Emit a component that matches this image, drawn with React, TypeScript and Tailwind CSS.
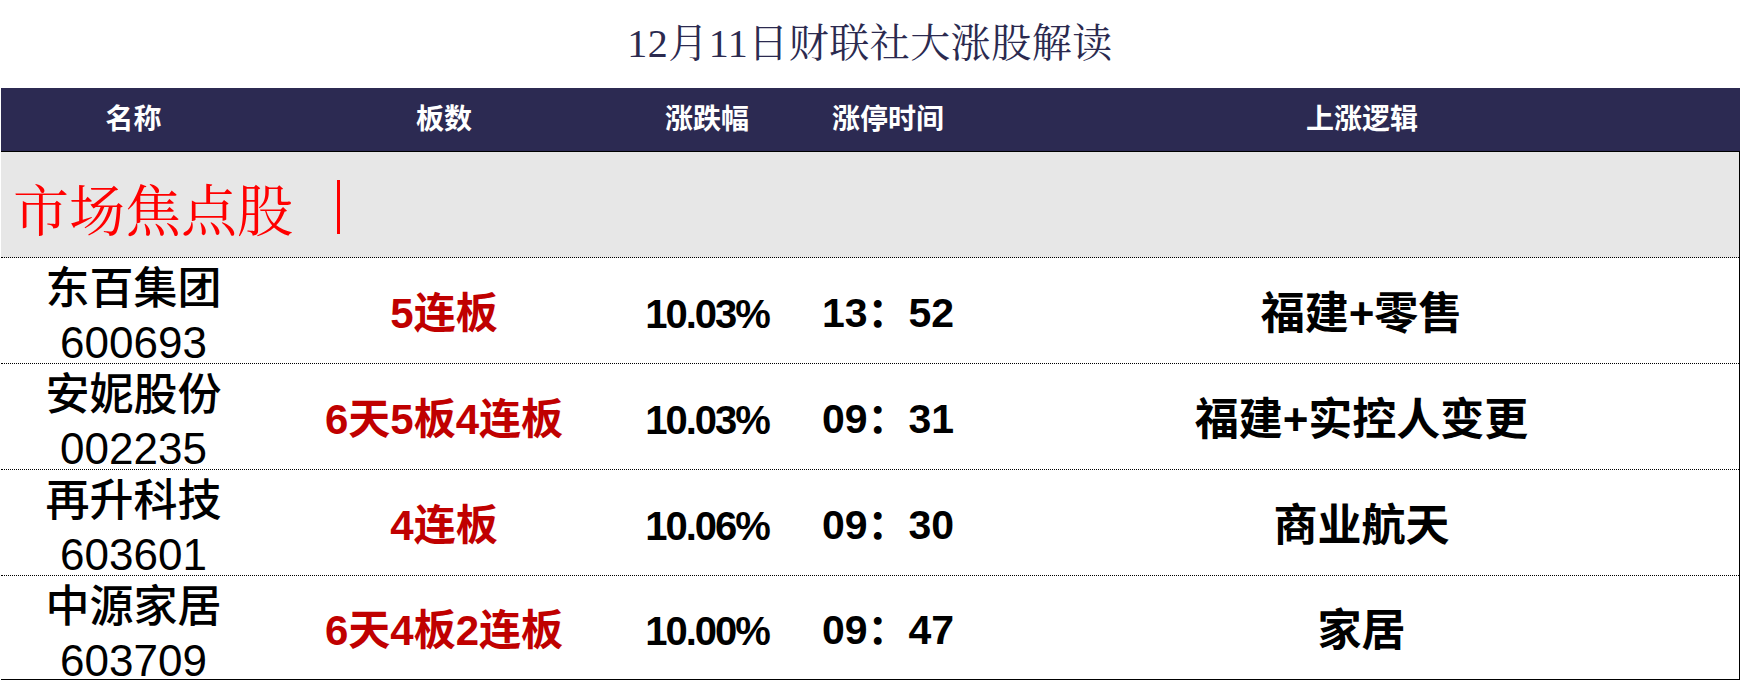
import React from "react";

const rows = [
  { name: "东百集团", code: "600693", board: "5连板", pct: "10.03%", time: "13：52", logic: "福建+零售" },
  { name: "安妮股份", code: "002235", board: "6天5板4连板", pct: "10.03%", time: "09：31", logic: "福建+实控人变更" },
  { name: "再升科技", code: "603601", board: "4连板", pct: "10.06%", time: "09：30", logic: "商业航天" },
  { name: "中源家居", code: "603709", board: "6天4板2连板", pct: "10.00%", time: "09：47", logic: "家居" },
];

const sans = "font-['Liberation_Sans','Noto_Sans_CJK_SC',sans-serif]";

export default function App() {
  return (
    <div className="w-[1740px] h-[682px] bg-white overflow-hidden">
      <div className="h-[88px] flex items-center justify-center">
        <span className="font-['Liberation_Serif','Noto_Serif_CJK_SC','Noto_Sans_CJK_SC',serif] text-[40px] leading-none tracking-[0.5px] text-[#2b2a4f]">
          12月11日财联社大涨股解读
        </span>
      </div>
      <div className="pl-[1px]">
        <div
          className={`h-[64px] bg-[#2c2a52] border-b border-black grid grid-cols-[265px_356px_170px_192px_1fr] grid-rows-1 items-center text-white font-bold text-[28px] leading-none ${sans}`}
        >
          <div className="text-center">名称</div>
          <div className="text-center">板数</div>
          <div className="text-center">涨跌幅</div>
          <div className="text-center">涨停时间</div>
          <div className="text-center">上涨逻辑</div>
        </div>
        <div className="border-r border-black">
          <div className="h-[106px] bg-[#e7e7e7] border-b border-dotted border-black flex items-center pl-[12px] pt-[4px]">
            <span className="font-['Noto_Serif_CJK_SC','Noto_Sans_CJK_SC',serif] text-[56px] leading-none text-[#ff0000]">
              市场焦点股
            </span>
            <div className="ml-[44px] w-[3px] h-[54px] bg-[#ff0000]" />
          </div>
          {rows.map((r, i) => (
            <div
              key={r.code}
              className={`${i === rows.length - 1 ? "h-[104px] border-b border-solid border-black" : "h-[106px] border-b border-dotted border-black"} grid grid-cols-[265px_356px_170px_192px_1fr] grid-rows-1 items-center pt-[6px] ${sans}`}
            >
              <div className="self-start flex flex-col items-center text-black">
                <div className="-mt-[3.5px] text-[44px] leading-[55px] font-medium whitespace-nowrap">{r.name}</div>
                <div className="mt-[7.5px] text-[44px] leading-[40px]">{r.code}</div>
              </div>
              <div className="text-center text-[42px] leading-none font-bold text-[#c00000] whitespace-nowrap">
                {r.board}
              </div>
              <div className="text-center text-[40px] leading-none font-bold tracking-[-2px] text-black">
                {r.pct}
              </div>
              <div className="text-center text-[41px] leading-none font-bold text-black whitespace-nowrap">
                {r.time}
              </div>
              <div className="text-center text-[44px] leading-none font-bold text-black whitespace-nowrap">
                {r.logic}
              </div>
            </div>
          ))}
        </div>
      </div>
    </div>
  );
}
